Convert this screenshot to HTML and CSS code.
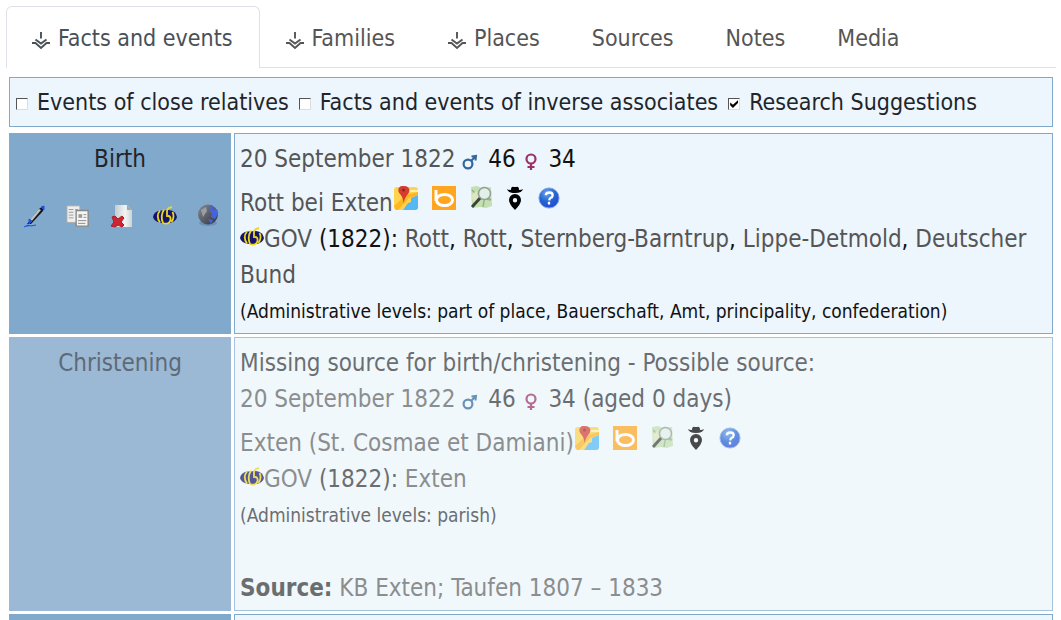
FILE: index.html
```html
<!DOCTYPE html>
<html lang="en">
<head>
<meta charset="utf-8">
<meta name="viewport" content="width=device-width, initial-scale=1">
<title>Facts and events</title>
<link rel="stylesheet" href="styles.css">
</head>
<body>
<svg class="sprite" aria-hidden="true">
  <defs>
    <linearGradient id="globe-fill" x1="0" y1="0" x2="1" y2="1"><stop offset="0" stop-color="#858a94"/><stop offset="1" stop-color="#30343f"/></linearGradient>
    <radialGradient id="help-fill" cx=".4" cy=".25" r=".8"><stop offset="0" stop-color="#6aa2ee"/><stop offset=".55" stop-color="#2362d0"/><stop offset="1" stop-color="#2747d8"/></radialGradient>
    <linearGradient id="sheet-fill"><stop offset="0" stop-color="#c5cbcd"/><stop offset=".6" stop-color="#f2f4f4"/><stop offset="1" stop-color="#cdd3d5"/></linearGradient>
  </defs>
  <symbol id="down" viewBox="0 0 20 20"><path d="M10 2v6.500M4.500 9.500L10 13.500l5.500-4M1 13h3.500l5.500 5 5.500-5H19" fill="none" stroke="currentColor" stroke-width="1.900"/></symbol>
  <symbol id="male" viewBox="0 0 16 16"><circle cx="6" cy="10" r="4.400" fill="none" stroke="#336699" stroke-width="2.200"/><path d="M9 7l4-4M9.500 2.500L14 2l-.5 4.500" fill="none" stroke="#336699" stroke-width="2"/></symbol>
  <symbol id="female" viewBox="0 0 16 18"><circle cx="8" cy="6" r="4.500" fill="none" stroke="#993366" stroke-width="2.200"/><path d="M8 10.500v6.500M4.500 14h7" fill="none" stroke="#993366" stroke-width="2.200"/></symbol>
  <symbol id="gov" viewBox="0 0 24 20">
    <path d="M0 11Q1 5 8 4.500L16 4q7 1 8 7-1 5-8 6H9Q1 16 0 11z" fill="#14146c"/>
    <path d="M7 4.500Q2.500 10 7 16.500M11 3.500Q7 10 10 17M19 1q-5 1-5 4v6M10 17q6 2 7.500-3 .5-4-2.500-4M19.500 6q2.500 5-1 10" fill="none" stroke="#ecd71c" stroke-width="1.800"/>
  </symbol>
  <symbol id="pen" viewBox="0 0 24 24"><path d="M4 20L17 4l4-1-1 4L8 20z" fill="#15171d"/><path d="M6 17L16 5l2 1L8 18z" fill="#c2c5c7"/><path d="M18 3l3-1v4zM6 15l3 2-3 3zM1 23l4-2 3 1 5-1" fill="#1c48dc" stroke="#2152dc" stroke-width="1"/></symbol>
  <symbol id="copy" viewBox="0 0 26 24"><path d="M1 1h14v18H1z" fill="#eee" stroke="#aaa"/><path d="M3 5h5M10 5h3M3 8h5M3 11h5M3 14h5" stroke="#999"/><path d="M11 6h13v17H11z" fill="#f5f5f5" stroke="#888" stroke-width="1.500"/><path d="M13.500 10h4v4h-4z" fill="#999"/><path d="M19 10.500h3M19 13.500h3M13 17h9M13 20h8" stroke="#888"/></symbol>
  <symbol id="delete" viewBox="0 0 24 24"><path d="M5 1h12l5 5v17H5z" fill="url(#sheet-fill)"/><path d="M17 1v5h5z" fill="#9da8ad"/><path d="M2 13l3-1 3 3 4-3 2 2-3 4 3 3-2 2-4-2-3 2-4-1 3-4z" fill="#cf2531" stroke="#a51e30"/></symbol>
  <symbol id="globe" viewBox="0 0 24 24"><ellipse cx="12" cy="19" rx="9" ry="3" fill="#587aa0" opacity=".5"/><circle cx="12" cy="10.500" r="10" fill="url(#globe-fill)"/><path d="M15 1l3 2-2 3 5-1 1 5-3 5-4-2 1-3-2-3zM12 15l5 1-2 4z" fill="#4763dc"/><path d="M5 6l5-3 1 4-4 6z" fill="#9a9da3"/></symbol>
  <symbol id="gmap" viewBox="0 0 24 24"><rect width="24" height="23" y="1" rx="3" fill="#ffd34e"/><path d="M0 20L12 9l12-3v3l-9 3L4 24H2z" fill="#ffb51f"/><path d="M9 24l5-7 3-1v-4l7-3v12q0 3-3 3z" fill="#55b8f5"/><path d="M14 4h10v2H14z" fill="#fff0a9"/><path d="M9.500 17Q9 11 6 8C2 3 6-1 10 0c5 0 7 4 4 8q-3 3-4.500 9z" fill="#d43c30"/><circle cx="9.500" cy="4" r="1.500" fill="#872822"/></symbol>
  <symbol id="bing" viewBox="0 0 24 24"><path d="M0 0h24v24H0z" fill="#ffa51f"/><path d="M4 4v11" stroke="#fff" stroke-width="3"/><ellipse cx="12.500" cy="14" rx="8" ry="5.500" fill="none" stroke="#fff" stroke-width="3"/></symbol>
  <symbol id="osm" viewBox="0 0 22 24"><path d="M1 1l6-1 5 2 9-1 1 19-6 2-6-1-8 1z" fill="#c4dfb1"/><path d="M2 4l8 8 11 2M4 20l5-13 5-6M13 21l2-12 6 5" fill="none" stroke="#8eb785" stroke-width="1.500"/><path d="M1 10l5-5 4 8-4 7z" fill="#dfe6bd"/><path d="M2 21l9-10" stroke="#39433a" stroke-width="3"/><circle cx="14.500" cy="7.500" r="6" fill="#e3f0e7" stroke="#929f99" stroke-width="1.500"/></symbol>
  <symbol id="agent" viewBox="0 0 18 24"><path d="M5 4Q5 0 8 1h2q3-1 3 3 3 0 4-1-1 4-8 4T1 3q1 1 4 1z"/><path d="M9 8a6 6 0 0 0-6 6q0 4 6 10 6-6 6-10a6 6 0 0 0-6-6zm0 4a2.200 2.200 0 1 1 0 4.400A2.200 2.200 0 0 1 9 12z" fill-rule="evenodd"/></symbol>
  <symbol id="help" viewBox="0 0 24 24"><circle cx="12" cy="12" r="11" fill="url(#help-fill)" stroke="#7da4e5"/><path d="M8.500 9q0-3 4-3 3.500 0 3.500 3 0 2-2.500 3-1 .5-1.200 2.500M12 16v3" fill="none" stroke="#fff" stroke-width="2.500"/></symbol>
</svg>

<main class="page">
  <nav class="tabs" aria-label="Individual">
    <a class="tab tab-active" href="#facts"><svg class="tab-icon"><use href="#down"/></svg>Facts and events</a>
    <a class="tab" href="#families"><svg class="tab-icon"><use href="#down"/></svg>Families</a>
    <a class="tab" href="#places"><svg class="tab-icon"><use href="#down"/></svg>Places</a>
    <a class="tab" href="#sources">Sources</a>
    <a class="tab" href="#notes">Notes</a>
    <a class="tab" href="#media">Media</a>
  </nav>

  <section id="facts" class="panel">
    <form class="filters">
      <label class="filter"><input class="check" type="checkbox">Events of close relatives</label>
      <label class="filter"><input class="check" type="checkbox">Facts and events of inverse associates</label>
      <label class="filter"><input class="check" type="checkbox" checked>Research Suggestions</label>
    </form>

    <table class="facts">
      <tbody>
        <tr>
          <th class="label" scope="row">
            Birth
            <div class="actions">
              <button class="action" type="button" aria-label="Edit"><svg class="icon"><use href="#pen"/></svg></button>
              <button class="action" type="button" aria-label="Copy"><svg class="icon"><use href="#copy"/></svg></button>
              <button class="action" type="button" aria-label="Delete"><svg class="icon"><use href="#delete"/></svg></button>
              <button class="action" type="button" aria-label="GOV"><svg class="icon"><use href="#gov"/></svg></button>
              <button class="action" type="button" aria-label="Globe"><svg class="icon"><use href="#globe"/></svg></button>
            </div>
          </th>
          <td class="value">
            <div><a class="link" href="#date">20 September 1822</a> <svg class="sex"><use href="#male"/></svg> 46 <svg class="sex"><use href="#female"/></svg> 34</div>
            <div class="place"><a class="link" href="#rott">Rott bei Exten</a><span class="maps"><a class="map" href="#gmap-1" aria-label="Google Maps"><svg class="icon"><use href="#gmap"/></svg></a><a class="map" href="#bing-1" aria-label="Bing Maps"><svg class="icon"><use href="#bing"/></svg></a><a class="map" href="#osm-1" aria-label="OpenStreetMap"><svg class="icon icon-medium"><use href="#osm"/></svg></a><a class="map" href="#agent-1" aria-label="Map finder"><svg class="icon icon-narrow"><use href="#agent"/></svg></a><a class="map" href="#help-1" aria-label="Help"><svg class="icon icon-medium"><use href="#help"/></svg></a></span></div>
            <div><svg class="gov"><use href="#gov"/></svg><a class="link" href="#gov-1">GOV</a> (1822): <a class="link" href="#p1">Rott</a>, <a class="link" href="#p2">Rott</a>, <a class="link" href="#p3">Sternberg-Barntrup</a>, <a class="link" href="#p4">Lippe-Detmold</a>, <a class="link" href="#p5">Deutscher Bund</a></div>
            <div class="levels">(Administrative levels: part of place, Bauerschaft, Amt, principality, confederation)</div>
          </td>
        </tr>
        <tr class="suggested">
          <th class="label" scope="row">Christening</th>
          <td class="value">
            <div>Missing source for birth/christening - Possible source:</div>
            <div><a class="link" href="#date-2">20 September 1822</a> <svg class="sex"><use href="#male"/></svg> 46 <svg class="sex"><use href="#female"/></svg> 34 (aged 0 days)</div>
            <div class="place"><a class="link" href="#exten">Exten (St. Cosmae et Damiani)</a><span class="maps"><a class="map" href="#gmap-2" aria-label="Google Maps"><svg class="icon"><use href="#gmap"/></svg></a><a class="map" href="#bing-2" aria-label="Bing Maps"><svg class="icon"><use href="#bing"/></svg></a><a class="map" href="#osm-2" aria-label="OpenStreetMap"><svg class="icon icon-medium"><use href="#osm"/></svg></a><a class="map" href="#agent-2" aria-label="Map finder"><svg class="icon icon-narrow"><use href="#agent"/></svg></a><a class="map" href="#help-2" aria-label="Help"><svg class="icon icon-medium"><use href="#help"/></svg></a></span></div>
            <div><svg class="gov"><use href="#gov"/></svg><a class="link" href="#gov-2">GOV</a> (1822): <a class="link" href="#p6">Exten</a></div>
            <div class="levels">(Administrative levels: parish)</div>
            <div class="source"><b>Source:</b> <a class="link" href="#kb">KB Exten; Taufen 1807 – 1833</a></div>
          </td>
        </tr>
        <tr><th class="label" scope="row"></th><td class="value"></td></tr>
      </tbody>
    </table>
  </section>
</main>
</body>
</html>
```
FILE: styles.css
```css
* { box-sizing: border-box; }
body {
  margin: 0;
  height: 100vh;
  overflow: hidden;
  background: #fff;
  color: #212529;
  font-family: "DejaVu Sans Condensed", "Noto Sans", sans-serif;
  font-size: 23px;
  line-height: 36px;
}
.sprite { position: absolute; width: 0; height: 0; }
.page { padding: 6px 5px 0 6px; }
.tabs { display: flex; border-bottom: 1px solid #dee2e6; }
.tab {
  padding: 13px 26px 11px 24px;
  border: 1px solid transparent;
  border-bottom: 0;
  color: #555;
  text-decoration: none;
  white-space: nowrap;
}
.tab-active {
  margin-bottom: -1px;
  border-color: #dee2e6;
  border-radius: 6px 6px 0 0;
  background: #fff;
  color: #495057;
}
.tab-icon { width: 20px; height: 20px; margin-right: 7px; vertical-align: -4px; }
.filters {
  display: flex;
  flex-wrap: wrap;
  column-gap: 10px;
  margin: 9px 3px 3px;
  padding: 6px;
  border: 1px solid #81a9cb;
  background: #edf5fd;
}
.filter { display: flex; align-items: center; gap: 9px; }
.check {
  appearance: none;
  width: 12px;
  height: 12px;
  margin: 4px 0 0;
  border: 1px solid;
  border-color: #555 #e0ddd8 #e0ddd8 #555;
  background: #fff;
}
.check:checked::before {
  content: "";
  display: block;
  width: 8px;
  height: 8px;
  margin: 1px;
  background: #000;
  clip-path: polygon(0 30%, 35% 60%, 100% 0, 100% 35%, 35% 100%, 0 65%);
}
.facts { width: 100%; border-spacing: 3px; font-size: 24px; }
.label {
  width: 222px;
  padding: 8px 5px 5px;
  background: #81a9cb;
  font-weight: normal;
  text-align: center;
  vertical-align: top;
}
.value {
  padding: 7px 5px 4px;
  border: 1px solid #81a9cb;
  background: #edf5fd;
  color: #111;
  vertical-align: top;
}
.link { color: #555; text-decoration: none; }
.actions { display: flex; justify-content: space-between; padding: 27px 6px 0 9px; }
.action { width: 24px; height: 24px; padding: 0; border: 0; background: none; }
.icon { display: block; width: 24px; height: 24px; }
.icon-medium { width: 22px; }
.icon-narrow { width: 18px; }
.sex { width: 16px; height: 18px; margin-right: 3px; vertical-align: -4px; }
.place { display: flex; align-items: flex-start; padding-top: 8px; }
.maps { display: flex; gap: 14px; padding: 1px 0 0 1px; }
.gov { width: 24px; height: 20px; vertical-align: 0; }
.levels { font-size: 19px; }
.source { margin-top: 37px; }
.suggested .label { background: #9bb8d5; color: #5e6a76; }
.suggested .value { border-color: #a7c2dc; background: #f1f8fc; color: #6b6e71; }
.suggested .link { color: #8b8d8e; }
.suggested svg { opacity: .7; }
```
